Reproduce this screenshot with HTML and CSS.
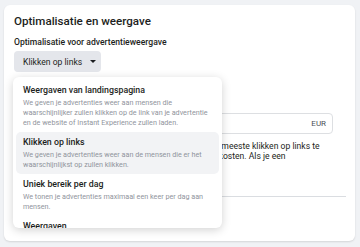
FILE: index.html
```html
<!DOCTYPE html>
<html lang="nl">

<head>
    <meta charset="utf-8">
    <meta name="viewport" content="width=device-width, initial-scale=1.0">
    <title>Optimalisatie en weergave</title>
    <link rel="stylesheet" href="styles.css">
</head>

<body>

    <section class="kaart">
        <h2>Optimalisatie en weergave</h2>
        <p class="label">Optimalisatie voor advertentieweergave</p>

        <div class="kiezer">
            <button class="knap">Klikken op links <span class="pijl"></span></button>

            <div class="menu">
                <div class="optie">
                    <h3>Weergaven van landingspagina</h3>
                    <p>We geven je advertenties weer aan mensen die waarschijnlijker zullen klikken op de link van je advertentie en de website of Instant Experience zullen laden.</p>
                </div>
                <div class="optie valgt">
                    <h3>Klikken op links</h3>
                    <p>We geven je advertenties weer aan de mensen die er het waarschijnlijkst op zullen klikken.</p>
                </div>
                <div class="optie">
                    <h3>Uniek bereik per dag</h3>
                    <p>We tonen je advertenties maximaal een keer per dag aan mensen.</p>
                </div>
                <div class="optie">
                    <h3>Weergaven</h3>
                    <p>We geven je advertenties zo vaak mogelijk weer aan mensen.</p>
                </div>
            </div>
        </div>

        <div class="kosten">
            <p class="label">Kostenbeheer (optioneel)</p>
            <div class="invoer">
                <span class="valuta">EUR</span>
            </div>
            <p class="uitleg">We proberen met je totale budget zo goed mogelijk de meeste klikken op links te krijgen, tegen de laagste mogelijke gemiddelde totale kosten. Als je een</p>
        </div>

        <hr>
    </section>

</body>

</html>
```

FILE: styles.css
```css
* {
    box-sizing: border-box;
}

body {
    margin: 0;
    padding: 5px 5px 6px 4px;
    background-color: #f0f2f5;
    font-family: Roboto, "Liberation Sans", sans-serif;
    color: #1c1e21;
}

.kaart {
    background-color: #ffffff;
    border-radius: 6px;
    box-shadow: 0 1px 2px rgba(0, 0, 0, 0.12);
    height: 236px;
    padding: 10px 9px 10px 10px;
    overflow: hidden;
}

h2 {
    margin: 0;
    font-size: 11.6px;
    line-height: 12px;
    font-weight: 500;
}

.label {
    margin: 9px 0 3px;
    font-size: 8.6px;
    line-height: 12px;
    font-weight: 500;
}

.kiezer {
    position: relative;
}

.knap {
    display: flex;
    align-items: center;
    gap: 8px;
    height: 21px;
    width: 87px;
    padding: 0 0 0 9px;
    border: none;
    border-radius: 4px;
    background-color: #e4e6eb;
    color: #1c1e21;
    font-family: Roboto, "Liberation Sans", sans-serif;
    font-size: 8.6px;
    white-space: nowrap;
}

.pijl {
    width: 0;
    height: 0;
    border-left: 3px solid transparent;
    border-right: 3px solid transparent;
    border-top: 3.5px solid #1c1e21;
}

.menu {
    position: absolute;
    top: 26px;
    left: -1px;
    width: 209px;
    height: 151px;
    padding: 3px 3px 0;
    background-color: #ffffff;
    border-radius: 6px;
    box-shadow: 0 2px 10px rgba(0, 0, 0, 0.18);
    overflow: hidden;
    z-index: 2;
}

.optie {
    padding: 4px 7px;
    border-radius: 5px;
}

.optie.valgt {
    background-color: #f2f3f5;
}

.optie h3 {
    margin: 0 0 2px;
    font-size: 8.8px;
    line-height: 12px;
    font-weight: 500;
    color: #1c1e21;
}

.optie p {
    margin: 0;
    font-size: 7.2px;
    line-height: 10px;
    color: #90949c;
}

.kosten {
    margin-top: 23px;
    width: 319px;
}

.kosten .label {
    margin: 0 0 6px;
}

.invoer {
    display: flex;
    justify-content: flex-end;
    align-items: center;
    height: 21px;
    padding: 0 6px 0 8px;
    border: 1px solid #dddfe2;
    border-radius: 4px;
    font-size: 8px;
    color: #4b4f56;
}

.uitleg {
    margin: 7px 0 0;
    font-size: 8.6px;
    line-height: 10px;
    color: #1c1e21;
}

hr {
    margin: 35px 0 0;
    border: none;
    border-top: 1px solid #dadde1;
}
```
